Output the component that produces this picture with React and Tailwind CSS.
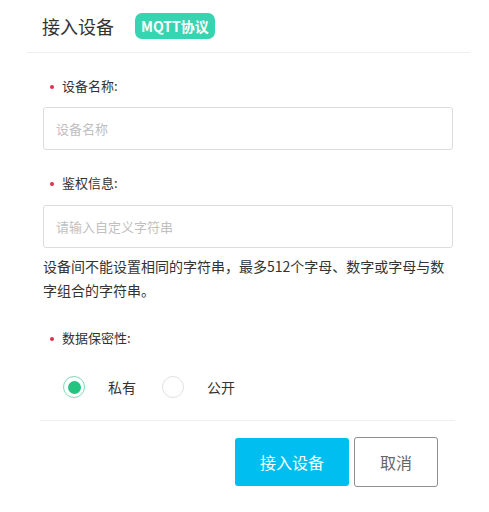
import React, { useState } from 'react';

const font = { fontFamily: '"Noto Sans CJK SC", "Noto Sans", sans-serif' };

const Label = ({ children }) => (
  <div className="flex items-center h-[20px] pl-[50px] text-[13px] text-[#333]">
    <span className="w-[4px] h-[4px] rounded-full bg-[#e0304e] mr-[8px] mt-[1px]"></span>
    {children}
  </div>
);

const Radio = ({ checked, label, onClick }) => (
  <button onClick={onClick} className="flex items-center">
    <span
      className={`w-[22px] h-[22px] rounded-full border flex items-center justify-center ${
        checked ? 'border-[#7fd9b5]' : 'border-[#e2e2e2]'
      }`}
    >
      {checked && <span className="w-[13px] h-[13px] rounded-full bg-[#22c47f]"></span>}
    </span>
    <span className="ml-[23px] text-[14px] text-[#333]">{label}</span>
  </button>
);

const App = () => {
  const [privacy, setPrivacy] = useState('private');

  return (
    <div className="w-[489px] h-[512px] bg-white overflow-hidden" style={font}>
      {/* Header */}
      <div className="ml-[27px] mr-[19px] h-[53px] border-b border-[#eeeeee] flex items-center pl-[15px]">
        <h1 className="text-[18px] text-[#333] leading-none">接入设备</h1>
        <span className="ml-[21px] h-[26px] px-[6px] rounded-[7px] bg-[#38d3b0] text-white text-[14px] font-bold flex items-center">
          MQTT协议
        </span>
      </div>

      {/* Form */}
      <div className="pt-[23px]">
        <Label>设备名称:</Label>
        <div className="mt-[11px] mx-[43px] w-[410px]">
          <input
            placeholder="设备名称"
            className="w-full h-[43px] border border-[#dcdcdc] rounded-[3px] px-[12px] text-[13px] placeholder:text-[#c0c0c0] outline-none"
          />
        </div>

        <div className="mt-[23px]">
          <Label>鉴权信息:</Label>
        </div>
        <div className="mt-[12px] mx-[43px] w-[410px]">
          <input
            placeholder="请输入自定义字符串"
            className="w-full h-[43px] border border-[#dcdcdc] rounded-[3px] px-[12px] text-[13px] placeholder:text-[#c0c0c0] outline-none"
          />
        </div>
        <p className="mt-[6px] mx-[43px] w-[410px] text-[14px] leading-[24px] text-[#333]">
          设备间不能设置相同的字符串，最多512个字母、数字或字母与数字组合的字符串。
        </p>

        <div className="mt-[26px]">
          <Label>数据保密性:</Label>
        </div>
        <div className="mt-[28px] pl-[63px] flex items-center gap-[26px]">
          <Radio checked={privacy === 'private'} label="私有" onClick={() => setPrivacy('private')} />
          <Radio checked={privacy === 'public'} label="公开" onClick={() => setPrivacy('public')} />
        </div>

        <div className="mt-[22px] ml-[40px] mr-[34px] border-t border-[#eeeeee]"></div>

        <div className="mt-[16px] flex justify-end mr-[51px] gap-[5px]">
          <button className="w-[114px] h-[48px] mt-[1px] rounded-[3px] bg-[#00bff0] text-white text-[16px]">
            接入设备
          </button>
          <button className="w-[84px] h-[50px] rounded-[3px] border border-[#8f8f8f] bg-white text-[#666] text-[16px]">
            取消
          </button>
        </div>
      </div>
    </div>
  );
};

export default App;
